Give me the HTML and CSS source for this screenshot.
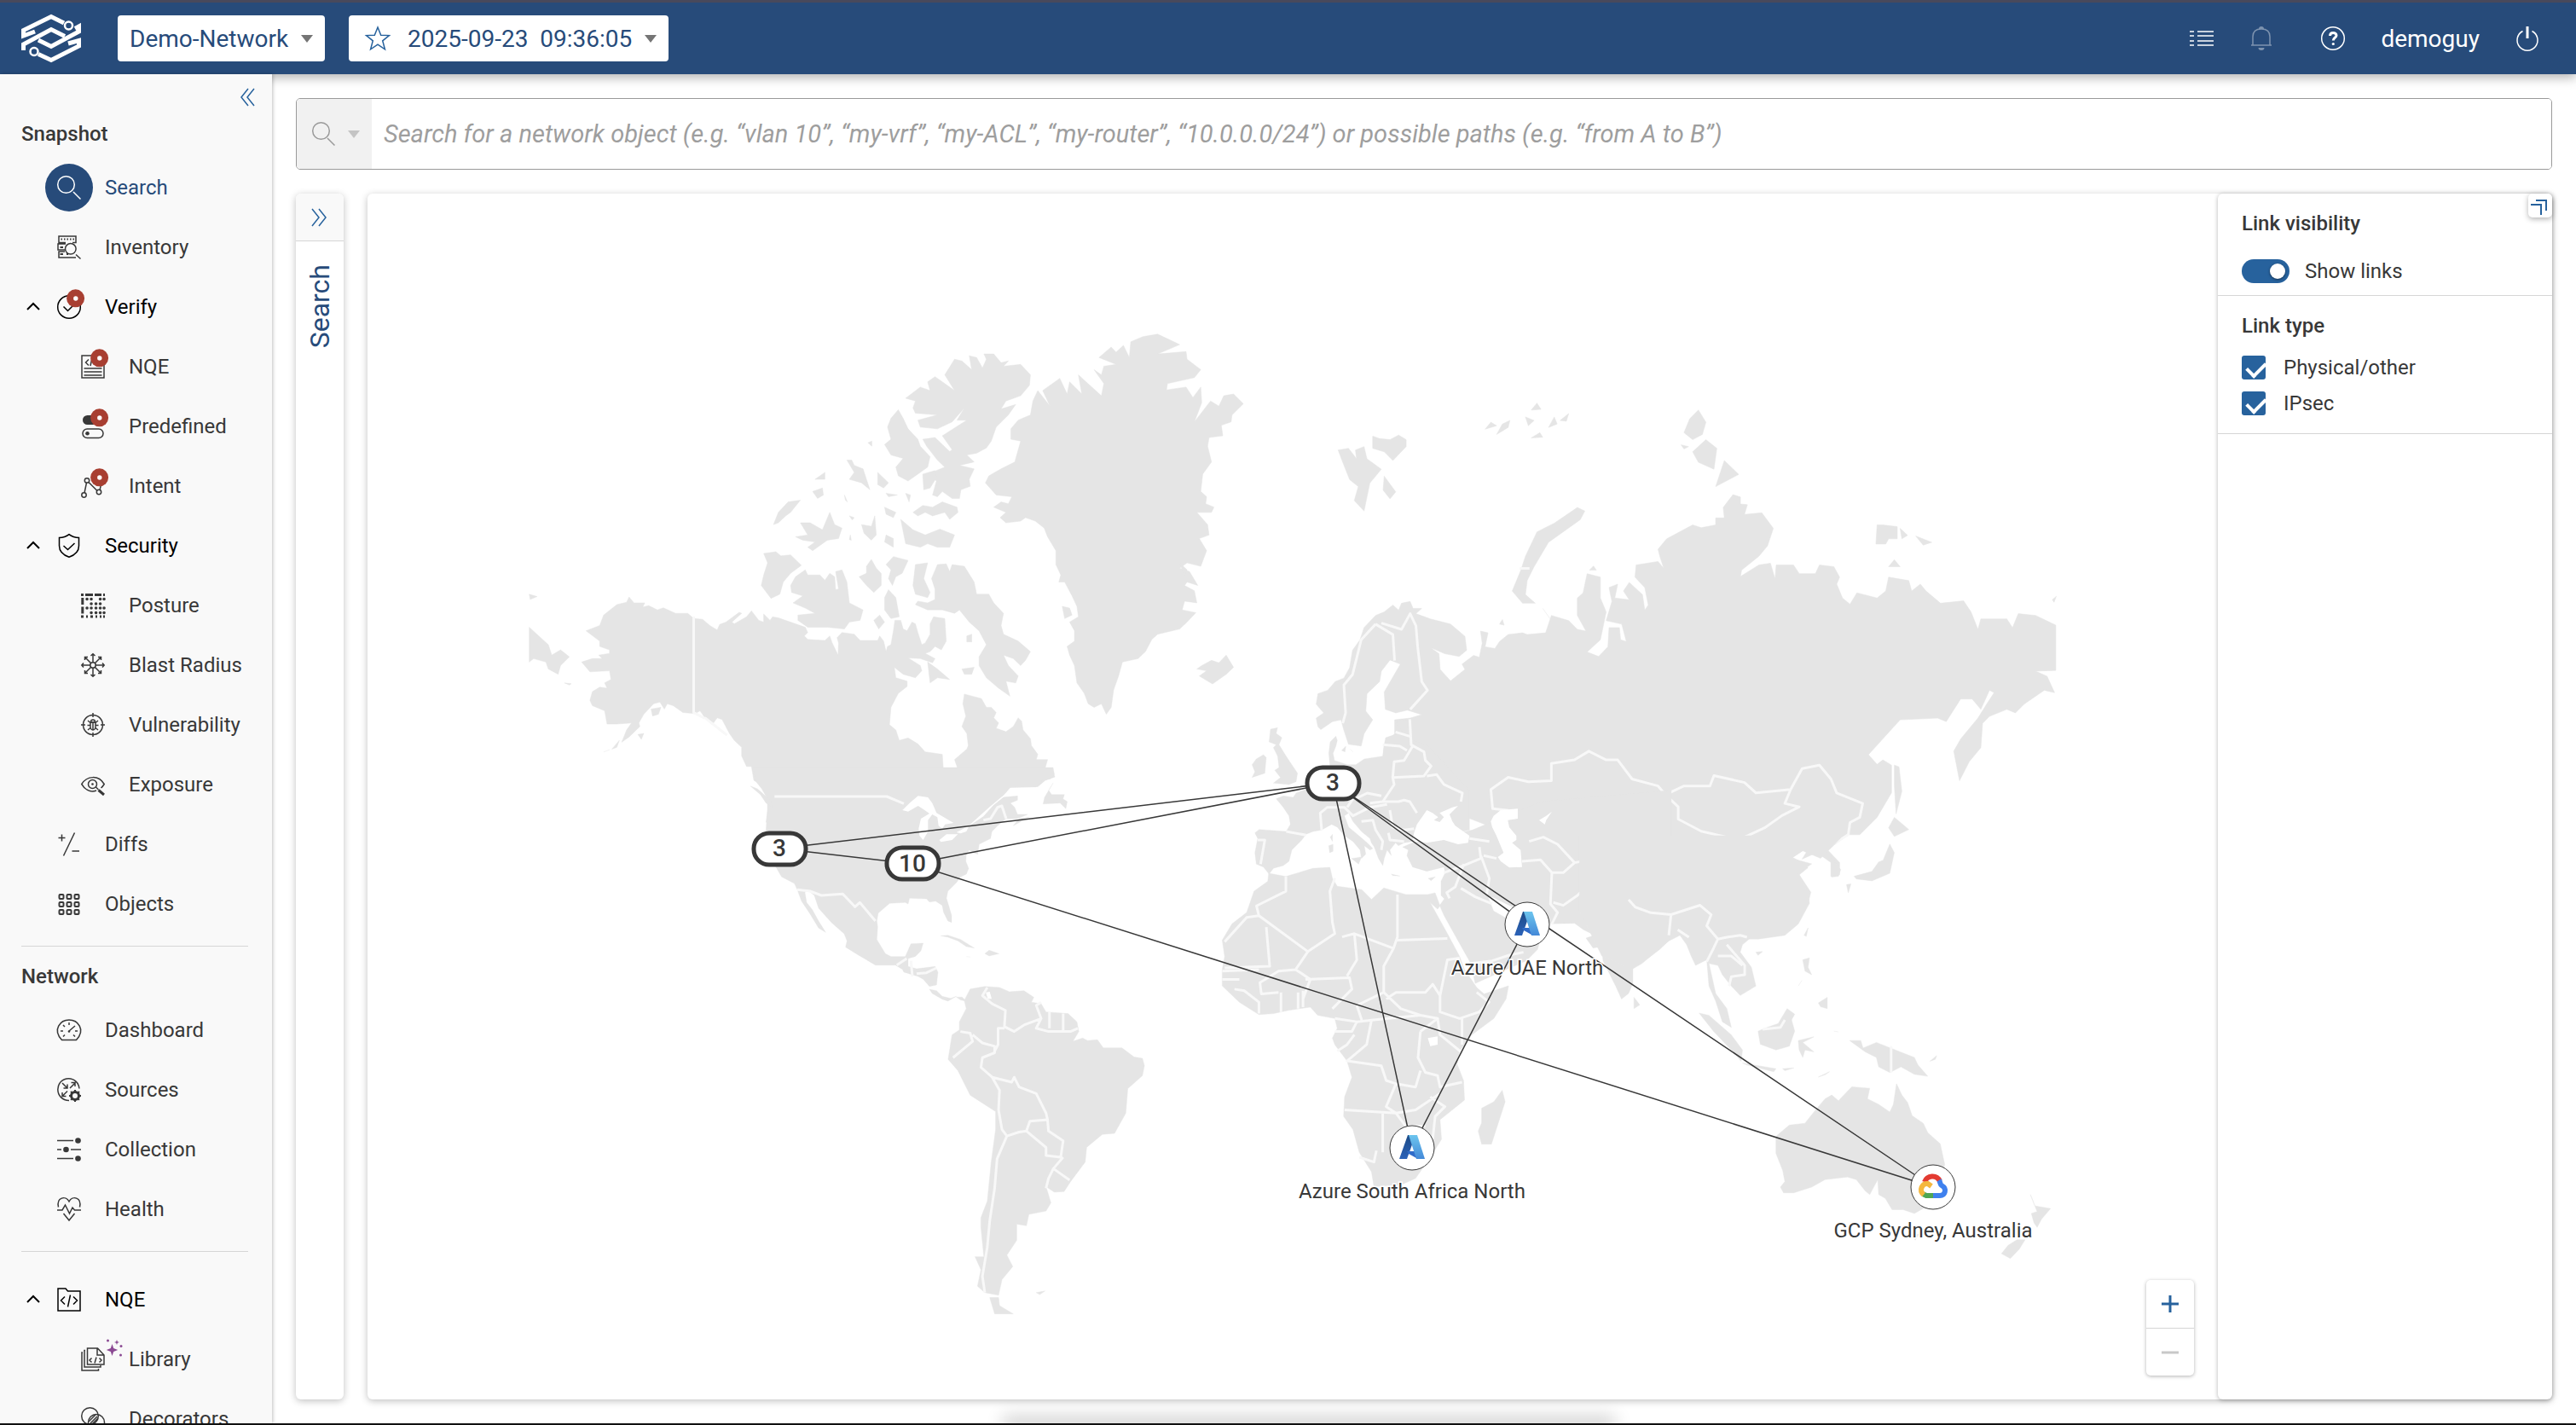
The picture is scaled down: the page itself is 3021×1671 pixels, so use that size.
FILE: index.html
```html
<!DOCTYPE html>
<html lang="en">

<head>
    <meta charset="UTF-8">
    <meta name="viewport" content="width=device-width, initial-scale=1.0">
    <title>Demo-Network - Search</title>
    <link rel="stylesheet" href="styles.css">
</head>

<body>

    <header class="topbar">
        <a class="logo" href="#" aria-label="Home">
            <svg width="70" height="58" viewBox="0 0 70 58" fill="none" stroke="#fff" stroke-width="5">
                <path d="M50 11L35 3.500L2.500 19.500V26L16 21" />
                <path d="M2.500 43V36L35 18.500L51 26.500" />
                <path d="M20 31L35 38.500L67.500 21V15L63 17.500" />
                <path d="M20 47.500L35 54.500L67.500 38V31.500L55 35" />
                <g fill="#274b7a" stroke-width="2.500">
                    <circle cx="55.500" cy="14" r="4.500" />
                    <circle cx="15" cy="44.500" r="4.500" />
                </g>
            </svg>
        </a>
        <div class="picker">
            <select aria-label="Network">
                <option>Demo-Network</option>
            </select>
            <span class="caret"></span>
        </div>
        <div class="picker picker-snapshot">
            <svg class="icon star" viewBox="0 0 28 28"><path d="M14 1l3.700 9.200 9.700.4-7.700 6.200 2.700 10-8.400-5.600-8.400 5.600 2.700-10L.6 10.600l9.700-.4z" /></svg>
            <select aria-label="Snapshot">
                <option>2025-09-23&nbsp; 09:36:05</option>
            </select>
            <span class="caret"></span>
        </div>

        <div class="topbar-actions">
            <button aria-label="Tasks">
                <svg class="icon" viewBox="0 0 28 28"><path d="M0 6h5M9 6h19M0 11h5M9 11h19M0 17h5M9 17h19M0 22h5M9 22h19" /></svg>
            </button>
            <button class="dimmed" aria-label="Notifications">
                <svg class="icon" viewBox="0 0 28 28"><path d="M2 22h24M4 22V12C4 6 8 3 14 3s10 3 10 9v10" /><path class="solid" d="M11 3a3 3 0 0 1 6 0zM10.500 25h7a3.500 3 0 0 1-7 0z" /></svg>
            </button>
            <button class="help" aria-label="Help">
                <svg class="icon" viewBox="0 0 28 28"><circle cx="14" cy="14" r="13.300" /><path class="bar" d="M10.500 11c0-5 7.500-4.500 7.500-.5 0 2.500-3.700 3-3.700 6" /><circle class="solid" cx="14.300" cy="20.500" r="1.600" /></svg>
            </button>
            <a class="user" href="#">demoguy</a>
            <button aria-label="Sign out">
                <svg class="icon" viewBox="0 0 28 28"><path d="M8.500 5.500a12 12 0 1 0 11 0" /><path class="bar" d="M14 0v14" /></svg>
            </button>
        </div>
    </header>

    <div class="layout">

        <nav class="sidebar">
            <div class="sidebar-collapse">
                <button aria-label="Collapse menu">
                    <svg class="icon" viewBox="0 0 28 28"><path d="M16 4L8 14l8 10M23 4l-8 10 8 10" /></svg>
                </button>
            </div>

            <section>
                <h2>Snapshot</h2>
                <a class="nav-item active" href="#">
                    <span class="chevron"></span>
                    <span class="nav-icon"><svg class="icon" viewBox="0 0 28 28"><circle cx="10.500" cy="10.500" r="9.800" /><path d="M19 19l8.500 8.500" /></svg></span>
                    Search
                </a>
                <a class="nav-item" href="#">
                    <span class="chevron"></span>
                    <span class="nav-icon"><svg class="icon" viewBox="0 0 28 28"><path d="M10 8.500H2V1h20v7.500h-4M9 17H1v-7h9M10 26H2v-7h7M10 26h12" /><path class="heavy" d="M4.500 4.500h1.500M8 4.500h1.500M11.500 4.500H13M15 4.500h1.500M18.500 4.500H20M3.500 14H7M3.500 22H7M11 22h2" /><circle cx="15.800" cy="15.800" r="6.300" /><path d="M22 22.500l5.500 5" /></svg></span>
                    Inventory
                </a>
                <a class="nav-item parent" href="#">
                    <span class="chevron"><svg class="icon" viewBox="0 0 28 28"><path class="heavy" d="M7 17l7-7 7 7" /></svg></span>
                    <span class="nav-icon"><svg class="icon" viewBox="0 0 28 28"><circle cx="14" cy="14" r="13.300" /><path d="M7.500 13.500l5 5 7-7" /><circle class="badge" cx="21.600" cy="3.800" r="10.500" /><circle class="badge-dot" cx="21.800" cy="4" r="2.700" /></svg></span>
                    Verify
                </a>
                <a class="nav-item child" href="#">
                    <span class="nav-icon"><svg class="icon" viewBox="0 0 28 28"><path d="M1 1h26v26H1zM3.500 16h21M3.500 20h21M3.500 24h21M9 5.500L5.500 9 9 12.500M13 4l-2 9" /><circle class="badge" cx="21.600" cy="3.800" r="10.500" /><circle class="badge-dot" cx="21.800" cy="4" r="2.700" /></svg></span>
                    NQE
                </a>
                <a class="nav-item child" href="#">
                    <span class="nav-icon"><svg class="icon" viewBox="0 0 28 28"><rect class="solid" x="2" y="1" width="24" height="11" rx="5.500" /><rect x="2" y="17" width="24" height="10.500" rx="5.200" /><circle class="solid" cx="7.500" cy="22.200" r="2.300" /><circle class="badge" cx="21.600" cy="3.800" r="10.500" /><circle class="badge-dot" cx="21.800" cy="4" r="2.700" /></svg></span>
                    Predefined
                </a>
                <a class="nav-item child" href="#">
                    <span class="nav-icon"><svg class="icon" viewBox="0 0 28 28"><path d="M4 22L6.500 10M9 9.500l10 10M22 19l3-14" /><circle cx="7" cy="7.400" r="2.700" /><circle cx="3.500" cy="24.500" r="2.700" /><circle cx="21" cy="21" r="2.700" /><circle class="badge" cx="21.600" cy="3.800" r="10.500" /><circle class="badge-dot" cx="21.800" cy="4" r="2.700" /></svg></span>
                    Intent
                </a>
                <a class="nav-item parent" href="#">
                    <span class="chevron"><svg class="icon" viewBox="0 0 28 28"><path class="heavy" d="M7 17l7-7 7 7" /></svg></span>
                    <span class="nav-icon"><svg class="icon" viewBox="0 0 28 28"><path d="M14 .7C10.500 3.500 6.500 4.500 2.500 4.500V14c0 7 5 11 11.500 13.300C20.500 25 25.500 21 25.500 14V4.500C21.500 4.500 17.500 3.500 14 .7zM7.500 14l5 4.500 8-7.500" /></svg></span>
                    Security
                </a>
                <a class="nav-item child" href="#">
                    <span class="nav-icon"><svg class="icon" viewBox="0 0 28 28"><path class="bar" d="M0 1.500h3M5 1.500h9M16 1.500h8M26 1.500h2M1.800 5v8M1.800 15.500v8M0 27h3M6 27h2M11 27h3M17 27h2M22 27h2M26 27h2" /><path class="dots" d="M7 6.500h.1M12 6.500h.1M22.500 6.500h.1M27 6.500h.1M12 12h.1M17.500 12h.1M22.500 12h.1M7 17h.1M12 17h.1M17.500 17h.1M22.500 17h.1M27 17h.1M12 22.500h.1M17.500 22.500h.1M22.500 22.500h.1M27 22.500h.1" /></svg></span>
                    Posture
                </a>
                <a class="nav-item child" href="#">
                    <span class="nav-icon"><svg class="icon" viewBox="0 0 28 28"><circle cx="14" cy="14" r="3.200" /><path d="M14 11V1M11.500 3L14 .8 16.500 3M14 17v10M11.500 25l2.500 2.200 2.500-2.200M11 14H1M3 11.500L.8 14 3 16.500M17 14h10M25 11.500l2.200 2.500-2.200 2.500M12 12L4.500 4.500M4.500 8V4.500H8M16 12l7.500-7.500M20 4.500h3.500V8M12 16l-7.500 7.500M4.500 20v3.500H8M16 16l7.500 7.500M20 23.500h3.500V20" /></svg></span>
                    Blast Radius
                </a>
                <a class="nav-item child" href="#">
                    <span class="nav-icon"><svg class="icon" viewBox="0 0 28 28"><circle cx="14" cy="14" r="11.500" /><path d="M14 0v5M14 23v5M0 14h5M23 14h5M14 12v8M11 11h6M7.500 14.500H11M17 14.500h3.500M8 9l3 2.500M20 9l-3 2.500M8 20l3-2.500M20 20l-3-2.500" /><path d="M11 11h6v5a3 4 0 0 1-6 0zM11.500 10.500a2.500 2.500 0 0 1 5 0" /></svg></span>
                    Vulnerability
                </a>
                <a class="nav-item child" href="#">
                    <span class="nav-icon"><svg class="icon" viewBox="0 0 28 28"><path d="M18 21C10 24 4 19 .8 13.500c6-10 20-11 26.400 0-1 1.700-2.200 3.200-3.700 4.500" /><circle cx="13.500" cy="13.500" r="5" /><circle class="solid" cx="13.500" cy="13.500" r="1.300" /><path d="M17.500 17l3 3" /><path class="bar" d="M20.500 20.500L27 26" /></svg></span>
                    Exposure
                </a>
                <a class="nav-item" href="#">
                    <span class="chevron"></span>
                    <span class="nav-icon"><svg class="icon" viewBox="0 0 28 28"><path d="M1.500 6.500h8M5.500 2.500v8M20.500.5L7.500 27.500M17.500 22h8.500" /></svg></span>
                    Diffs
                </a>
                <a class="nav-item" href="#">
                    <span class="chevron"></span>
                    <span class="nav-icon"><svg class="icon" viewBox="0 0 28 28"><g class="tiles"><rect x="2.500" y="3" width="5" height="5" rx="1" /><rect x="11.500" y="3" width="5" height="5" rx="1" /><rect x="20.500" y="3" width="5" height="5" rx="1" /><rect x="2.500" y="12" width="5" height="5" rx="1" /><rect x="11.500" y="12" width="5" height="5" rx="1" /><rect x="20.500" y="12" width="5" height="5" rx="1" /><rect x="2.500" y="21" width="5" height="5" rx="1" /><rect x="11.500" y="21" width="5" height="5" rx="1" /><rect x="20.500" y="21" width="5" height="5" rx="1" /></g></svg></span>
                    Objects
                </a>
            </section>

            <section>
                <h2>Network</h2>
                <a class="nav-item" href="#">
                    <span class="chevron"></span>
                    <span class="nav-icon"><svg class="icon" viewBox="0 0 28 28"><path d="M5.500 25.500C-6 13 4 2 14 2s20 11 8.500 23.500zM14 15l7-6M14 5v3M7 8l2 2M4 15h3M21 15h3M7 21.500l2-2M21 21.500l-2-2" /><circle class="solid" cx="14" cy="15.500" r="1.300" /></svg></span>
                    Dashboard
                </a>
                <a class="nav-item" href="#">
                    <span class="chevron"></span>
                    <span class="nav-icon"><svg class="icon" viewBox="0 0 28 28"><path d="M14 26.500C6 26.500.8 20.500.8 13.500S6 .8 13.500.8c6.500 0 12 5 12.500 11.700M6 6l6 6M12 7.500V12H7.500M15 12l6-6M16.500 5.500H21V10M12 15.500l-6 6M6 17v4.500h4.500" /><circle class="bar" cx="21" cy="21" r="4.500" /><path class="heavy" d="M21 14v14M14 21h14M16 16l10 10M26 16L16 26" stroke-dasharray="2.500 9 2.500" /></svg></span>
                    Sources
                </a>
                <a class="nav-item" href="#">
                    <span class="chevron"></span>
                    <span class="nav-icon"><svg class="icon" viewBox="0 0 28 28"><path d="M0 3.500h19M0 14h5M16 14h12M0 24.500h19" /><circle class="solid" cx="24.500" cy="3.500" r="3.300" /><circle class="solid" cx="10.500" cy="14" r="3.300" /><circle class="solid" cx="24.500" cy="24.500" r="3.300" /></svg></span>
                    Collection
                </a>
                <a class="nav-item" href="#">
                    <span class="chevron"></span>
                    <span class="nav-icon"><svg class="icon" viewBox="0 0 28 28"><path d="M1.500 11.500C-1 0 10-2.500 14 5c4-7.500 15-5 12.500 6.500M0 15h6l3.500-6 5 10 3.500-7 2.500 3H28M7.500 19l6.500 8 6.500-8" /></svg></span>
                    Health
                </a>
            </section>

            <section class="untitled">
                <a class="nav-item parent" href="#">
                    <span class="chevron"><svg class="icon" viewBox="0 0 28 28"><path class="heavy" d="M7 17l7-7 7 7" /></svg></span>
                    <span class="nav-icon"><svg class="icon" viewBox="0 0 28 28"><path d="M1 1h9l2.500 3H27v23H1zM9 10.500L4.500 15 9 19.500M19 10.500l4.500 4.500-4.500 4.500M15.500 8.500l-3 14" /></svg></span>
                    NQE
                </a>
                <a class="nav-item child" href="#">
                    <span class="nav-icon"><svg class="icon" viewBox="0 0 28 28"><path d="M7.500 1h12l7.500 8v11H7.500zM19 1v8h8M5 3.500H4V23h19v-2M2 6H1v21h19.500v-2M12.500 12.500L10 15l2.500 2.500M21.500 12.500L24 15l-2.500 2.500M18 11.500l-2 7" /><g class="sparkles"><path d="M36.500-4l1.700 5 5 2-5 2-1.700 5-1.700-5-5-2 5-2zM42-9l.8 2.200 2.200.8-2.200.8-.8 2.200-.8-2.200L39-6l2.200-.8z" /><circle cx="31.500" cy="-8" r="1.500" /><circle cx="47" cy="-1.500" r="1.500" /><circle cx="46.500" cy="9" r="1.500" /></g></svg></span>
                    Library
                </a>
                <a class="nav-item child" href="#">
                    <span class="nav-icon"><svg class="icon" viewBox="0 0 28 28"><circle cx="10.500" cy="10.500" r="9.800" /><circle cx="18" cy="18" r="9.500" /><path d="M9 17l8-8M11 19l8-8M13 20l7-7" /></svg></span>
                    Decorators
                </a>
            </section>
        </nav>

        <main class="content">
            <form class="search-bar">
                <button type="button" aria-label="Search type">
                    <svg class="icon" viewBox="0 0 28 28"><circle cx="10.500" cy="10.500" r="9.800" /><path d="M18 19l8.500 8.500" /></svg>
                    <span class="caret"></span>
                </button>
                <input type="text" aria-label="Search" placeholder="Search for a network object (e.g. “vlan 10”, “my-vrf”, “my-ACL”, “my-router”, “10.0.0.0/24”) or possible paths (e.g. “from A to B”)">
            </form>

            <div class="workspace">
                <aside class="card search-drawer">
                    <button aria-label="Expand search">
                        <svg class="icon" viewBox="0 0 28 28"><path d="M5 4l8 10-8 10M13 4l8 10-8 10" /></svg>
                    </button>
                    <h3>Search</h3>
                </aside>

                <div class="card map-card">
                    <div class="map">
                        <svg class="world" viewBox="431 227 2170 1414">
                            <!-- Greenland, Canada, Alaska -->
                            <g transform="translate(600 360) scale(.574 .4082)">
                                <path class="land" d="M240 833L250 850 272 850 268 862 280 858 298 870 310 864 335 880 360 880 372 895 390 897 405 915 420 928 425 912 438 905 465 877 470 880 450 905 455 910 480 890 490 873 505 900 515 905 515 882 528 900 533 890 545 893 600 920 605 935 598 945 605 955 640 958 650 945 655 965 667 1000 668 965 665 950 675 935 700 940 712 958 748 958 752 945 760 960 765 990 768 975 775 970 780 930 783 900 795 900 800 925 808 930 818 905 825 910 830 935 838 970 845 965 855 940 855 910 862 890 885 895 888 960 878 985 865 975 855 990 845 995 865 1010 860 1022 835 1010 810 1008 835 1030 838 1045 825 1065 800 1055 782 1035 785 1065 808 1075 808 1090 790 1110 775 1150 772 1200 785 1215 792 1245 810 1238 830 1255 845 1278 880 1285 882 1330 895 1345 907 1370 915 1340 905 1300 930 1270 933 1260 930 1225 920 1205 928 1175 922 1140 925 1112 960 1125 970 1150 980 1150 990 1165 985 1180 995 1195 990 1210 1010 1220 1025 1205 1035 1180 1042 1190 1045 1215 1060 1240 1062 1260 1075 1285 1072 1300 1095 1300 1090 1325 1105 1335 1110 1350 1090 1360 1075 1378 1018 1380 985 1415 940 1480 520 1480 525 1430 533 1410 515 1375 495 1360 490 1320 480 1320 470 1290 470 1265 455 1245 445 1225 430 1185 420 1180 410 1200 395 1180 385 1160 375 1168 350 1165 330 1145 318 1140 312 1155 303 1135 290 1140 270 1170 260 1195 262 1205 240 1235 225 1250 235 1215 245 1195 215 1198 195 1198 190 1160 165 1145 160 1130 165 1105 180 1092 195 1095 190 1080 203 1070 200 1045 160 1048 143 1020 165 1010 185 1010 178 1000 200 995 200 985 180 975 180 960 152 930 180 915 188 885 215 855 235 848z" />
                                <path class="land" d="M1320 78L1365 108 1320 135 1378 128 1380 150 1408 180 1395 203 1340 220 1338 238 1378 230 1392 260 1408 230 1410 275 1395 330 1428 270 1445 285 1455 255 1475 250 1495 278 1472 310 1470 330 1450 340 1453 370 1425 375 1422 400 1430 445 1412 480 1408 530 1420 545 1418 565 1435 575 1430 590 1400 590 1422 625 1425 655 1405 665 1420 700 1408 745 1380 735 1365 750 1385 760 1402 800 1380 790 1375 800 1395 815 1400 850 1375 845 1370 870 1398 878 1380 905 1365 925 1320 940 1308 955 1295 990 1280 1010 1248 1020 1240 1060 1230 1100 1225 1150 1215 1170 1205 1140 1190 1150 1178 1140 1170 1110 1155 1080 1150 1030 1140 1000 1135 975 1150 960 1150 930 1140 905 1158 890 1155 860 1145 830 1130 790 1118 790 1122 770 1112 740 1112 700 1095 660 1088 635 1070 615 1050 605 1040 615 1010 620 998 605 1010 590 985 575 1000 560 1015 565 1022 545 990 540 968 505 975 485 1000 465 1028 445 1040 385 1020 380 1020 350 1035 325 1060 310 1065 270 1075 240 1100 285 1085 240 1120 205 1135 250 1140 215 1165 250 1158 195 1205 255 1210 220 1190 180 1205 195 1210 170 1235 165 1200 145 1225 115 1235 130 1250 110 1262 145 1265 100 1290 85z" />
                                <path class="land" d="M905 150L920 155 940 180 935 140 950 145 962 175 970 150 965 135 985 135 1000 160 1015 155 1005 170 1040 165 1060 195 1058 225 1040 255 1010 270 1000 293 1030 280 1015 310 990 345 980 385 970 405 950 420 930 425 945 445 915 455 945 465 935 495 937 515 918 525 915 550 900 550 880 530 870 545 860 540 868 500 850 480 885 460 870 440 848 400 840 380 865 375 895 415 900 410 880 370 930 325 910 325 925 290 900 330 870 350 835 345 830 325 870 310 825 305 820 290 825 270 805 262 835 230 855 240 850 215 865 200 880 215 905 240 885 195z" />
                                <path class="land" d="M790 295L800 320 810 350 830 380 835 400 855 430 850 460 830 480 810 500 790 485 785 460 800 435 775 425 762 395 775 380 768 345 775 320zM515 708L540 703 550 715 570 712 592 742 570 765 555 790 548 825 530 837 510 800 515 770 523 735zM600 755L605 770 630 770 640 785 650 765 660 775 662 812 668 810 662 760 675 755 685 790 690 850 718 870 712 900 690 905 680 925 645 920 605 920 585 900 585 885 620 880 600 865 575 850 595 830 572 820 570 800 580 775zM735 725L745 750 755 765 755 800 740 820 725 800 710 775 725 765 725 745zM780 717L810 728 798 765 785 775 778 800 770 780 775 755 765 740zM770 812L785 835 792 890 775 895 762 870 762 835zM825 740L850 735 842 780 855 820 850 835 825 825 820 800z" />
                                <path class="land" d="M870 740L888 738 895 760 900 740 925 745 945 790 950 825 975 825 985 850 1005 880 1000 915 1005 940 1035 960 1060 990 1050 1015 1040 1030 1025 1010 1005 1000 1015 1030 1035 1060 1030 1080 1010 1075 1018 1118 995 1095 970 1065 955 1030 955 1005 970 970 955 930 935 905 915 870 905 880 880 870 850 870 825 855 830 845 850 850 865 840 865 810 858 780zM850 1020L870 1040 895 1070 870 1065 855 1080zM795 610L820 640 845 655 875 638 905 655 895 690 870 690 850 680 835 690 805 680zM715 625L735 630 742 600 745 655 735 670 720 650zM580 660L605 655 590 620 610 620 635 640 650 590 660 625 675 635 668 665 645 670 615 700 605 690 620 675 595 670zM535 625L545 590 565 560 590 555 570 590 560 600 545 620zM685 440L695 440 700 455 718 465 732 525 715 505 690 495 700 475zM620 495L640 475 640 495zM615 530L635 520 637 540 625 550zM748 475L770 505 760 520 748 510zM820 590L840 570 860 575 880 560 910 575 912 590 895 610 885 590 860 600 845 590 830 600zM762 575L785 590 780 605 765 595zM765 655L780 665 780 690 762 675zM920 1040L945 1035 940 1055 925 1055zM930 945L940 940 940 962 930 962zM728 390L736 385 736 400zM765 535L788 540 770 545zM740 900L752 885 762 905 750 925zM840 480L865 470 868 490 855 520 842 525zM690 600L700 605 696 612zM692 655L694 670 690 668zM805 535L815 540 812 560zM680 540L686 560 682 555z" />
                                <path class="land" d="M36 920L75 970 82 1000 100 985 118 1005 100 1030 95 1055 75 1040 70 1020 45 1010 36 1020zM36 825L52 832 38 840zM285 1155L305 1150 300 1170 288 1175zM205 1270L220 1245 215 1265zM258 1228L270 1225 265 1242zM188 1278L200 1272M1410 1030L1430 1015 1445 1022 1460 1000 1475 1035 1460 1055 1432 1083 1405 1060 1420 1045 1400 1040zM1125 860L1140 865 1145 885 1130 895zM1365 735L1380 755 1375 775zM108 1080L122 1082 118 1086z" />
                                <path class="border" d="M372 890V1165L395 1182M395 1180L440 1230" />
                            </g>

                            <!-- United States, Mexico, Caribbean -->
                            <g transform="translate(860 900) scale(.3333)">
                                <path class="land" d="M70 0L1125 0 1130 25 1115 40 1090 42 1065 68 975 70 945 105 1000 100 1000 115 975 125 990 140 1000 165 1035 165 1000 180 960 180 930 205 910 225 905 250 865 270 860 305 845 300 830 290 820 305 818 330 828 355 820 375 800 385 785 405 755 435 750 460 768 520 768 545 755 540 740 510 735 485 712 470 690 473 680 462 620 460 615 480 605 475 550 478 510 512 505 540 508 560 505 605 535 655 555 665 605 665 625 620 668 618 660 645 640 665 615 672 615 700 645 708 710 700 720 720 715 765 690 770 668 745 650 735 600 720 595 710 570 695 500 695 440 660 395 632 400 610 390 585 345 545 300 495 285 450 260 430 252 440 258 475 278 500 300 540 325 580 300 565 270 515 240 470 225 430 215 408 170 385 150 350 115 300 115 220 120 150 120 110 100 75 80 50z" />
                                <path class="land" d="M690 780L715 785 735 805 765 812 785 805 755 822 735 815 700 795zM785 808L805 808 820 822 800 818zM730 592L755 590 800 605 848 635 820 630 790 610 755 597zM885 655L900 643 935 655 900 663zM820 665L835 667M1125 55L1110 80 1120 95 1165 95 1160 110 1175 120 1170 145 1150 125 1090 128 1095 105zM985 205L1005 180 1040 175zM60 65L85 75 130 115 140 140 115 125 95 95z" />
                                <path class="water" d="M595 150L620 125 650 100 685 105 700 125 715 160 775 195 745 200 735 215 722 205 718 175 700 165 685 185 685 225 668 255 655 240 652 215 660 180 690 162 670 148 650 135 615 155zM725 255L750 235 790 235 770 255 730 262zM785 228L830 205 820 225 800 232z" />
                                <path class="water" d="M600 130L620 122M820 212L880 172 915 133 975 85 960 90 900 140 850 185z" />
                                <path class="border" d="M145 102H540L600 127M880 185L905 180 930 140 945 135 960 180M225 430L270 435 310 450 385 445 428 490 445 475 500 540M575 695L610 672M645 725L680 722 715 705M625 680L630 735" />
                            </g>

                            <!-- South America and Africa -->
                            <g transform="translate(1000 980) scale(.574 .3827)">
                                <path class="land" d="M270 462L300 465 320 478 350 475 370 495 365 510 385 515 395 540 440 545 458 570 462 600 450 630 470 620 480 628 500 625 512 650 550 650 575 678 592 682 596 705 592 735 562 775 558 850 535 912 510 915 478 955 475 1000 445 1060 432 1090 412 1092 395 1075 405 1125 395 1150 360 1160 355 1195 335 1190 335 1240 315 1285 327 1320 305 1360 298 1408 270 1400 255 1380 262 1330 250 1290 268 1290 262 1200 262 1170 275 1120 283 1000 292 900 292 845 240 795 215 720 195 685 203 610 218 595 218 570 232 530 228 505 240 470zM280 1415L298 1415 300 1440 328 1465 290 1465zM375 1400L393 1395 382 1406z" />
                                <path class="water" d="M272 480L280 478 284 500 276 500z" />
                                <path class="border" d="M275 465L265 490 285 515 312 535 310 585 330 600 350 580 385 560 375 520 385 510M385 560L375 590 400 600 445 600 460 590M402 540V590M430 545V600M310 590H297V640L290 660M205 680L245 630 240 605 220 600M245 610L265 635 290 645 290 665 265 680 262 710 285 740 325 755 330 740 340 770 375 790 395 850 398 870 362 875 355 905 340 908 315 920 305 900 298 840 300 780 285 740M398 870L400 905 430 935 425 985 395 980 395 955 355 905M430 985L410 1020 443 1055M410 1020L400 1050 395 1080M315 920L295 990 290 1080 280 1180 275 1260 265 1350 270 1400" />
                                <path class="land" d="M850 115L885 125 940 100 975 97 980 130 990 155 1040 165 1060 195 1085 160 1130 180 1175 180 1190 175 1200 215 1195 225 1180 205 1215 300 1240 370 1250 410 1275 465 1290 485 1340 460 1335 500 1310 560 1265 610 1240 660 1235 700 1248 750 1250 810 1200 870 1203 930 1180 985 1150 1050 1120 1070 1065 1075 1060 1030 1035 970 1022 900 1003 860 1005 800 1020 740 1010 690 985 640 980 620 990 590 985 560 950 550 935 525 890 535 860 545 830 548 790 510 755 460 755 410 760 370 755 320 775 270 805 235 820 170 848 140zM1327 780L1333 815 1305 945 1285 945 1278 905 1285 880 1285 835 1310 815z" />
                                <path class="water" d="M1175 620L1195 615 1195 640 1180 645z" />
                                <path class="border" d="M885 125V170L825 215 830 245 805 250 760 325M830 245L930 355 985 300 980 265 975 170 985 130M845 280L852 400 760 405M930 355L905 410 870 415 832 450 835 485 870 480M1000 310L1025 300 1105 345V345L1113 310V180M1113 320L1215 315M1025 300L1030 380 1010 430M925 440L1015 435 1020 470 980 530M1105 345L1085 400 1085 480 1030 520M905 410L935 440 920 500M875 480V540M910 480V530M920 475V525M755 415L830 410M755 440H790M780 470L800 475 830 510V545M1085 480L1120 530 1160 550 1060 565 1030 570 985 560M1090 500L1110 480 1170 480 1185 455 1200 490V540L1240 560 1280 540 1300 510 1275 480M1200 490L1215 380 1240 375M1195 560L1200 610 1245 665M1245 560V640M1160 550L1195 560 1160 600M1060 565L1050 640 1010 690 1080 705 1090 750 1110 760 1150 770 1160 720M1160 600L1155 680 1170 725 1195 735 1200 770 1245 755M1110 760L1090 830 1110 850 1150 840 1200 790M1005 840L1110 850M1083 850V970M1035 985L1065 1000 1070 965M1110 850L1130 890 1170 890M1180 800L1210 830 1190 860 1185 930M1030 570L1020 600H985M1030 520L1040 565M990 660L1010 640 1025 610" />
                            </g>

                            <!-- Scandinavia, Russia, northern Asia -->
                            <g transform="translate(1380 440) scale(.676 .4082)">
                                <path class="land" d="M245 1010L242 985 255 970 242 945 245 915 262 905 275 880 290 870 300 840 305 790 318 760 325 725 345 690 360 680 375 660 385 675 390 655 405 650 410 670 425 670 415 685 440 700 475 715 500 750 503 790 490 808 465 800 440 782 455 800 457 845 475 878 500 845 495 830 515 805 525 810 530 770 527 735 540 740 535 780 552 785 560 765 575 745 600 740 608 745 640 740 650 690 680 705 695 730 710 735 695 690 695 640 705 625 712 570 735 580 735 640 745 680 735 760 712 795 732 808 748 780 750 725 768 725 770 760 780 765 772 715 745 705 755 650 750 610 765 600 760 640 785 645 775 620 785 595 808 630 812 675 818 660 812 610 795 580 797 545 835 535 845 555 838 520 835 500 850 470 895 430 910 438 935 430 935 410 950 410 948 380 965 343 978 350 978 370 990 372 985 400 1015 395 1035 440 1025 490 1010 520 980 560 978 578 1010 545 1030 540 1038 585 1040 545 1070 545 1080 570 1108 570 1115 545 1140 550 1150 580 1145 600 1155 640 1168 658 1180 625 1215 640 1230 620 1235 580 1270 590 1275 620 1290 600 1300 620 1325 655 1365 648 1378 680 1390 730 1395 700 1440 700 1450 725 1460 685 1490 690 1525 718 1525 848 1490 850 1510 865 1523 912 1505 905 1470 945 1455 970 1440 960 1410 980 1398 1000 1395 1070 1375 1110 1358 1165 1348 1080 1360 1045 1390 985 1405 945 1418 912 1410 905 1395 960 1380 930 1360 930 1335 995 1320 985 1255 990 1200 1090 1215 1118 1225 1105 1240 1120 1240 1200 1215 1270 1185 1320 1165 1320 1140 1350 1130 1365 1150 1400 1150 1435 1135 1440 1135 1400 1118 1380 1125 1360 1085 1390 1100 1350 1068 1385 1085 1400 1095 1415 1080 1435 1100 1485 1095 1520 1080 1568 640 1568 600 1420 550 1300 440 1230 350 1150 358 1095 360 1060 378 1030 378 990 405 985 425 975 400 962 380 970 362 960 360 910 388 830 370 818 355 850 352 880 330 915 328 965 340 990 325 1030 320 1065 298 1060 290 1020 285 990 270 995 250 1018z" />
                                <path class="land" d="M695 380L708 390 700 415 645 480 620 550 608 590 605 630 622 655 600 655 582 620 597 560 605 520 625 450 655 425zM280 215L298 210 312 240 310 215 325 205 330 240 355 270 335 310 325 390 308 360 315 320 300 300 288 250zM340 175L352 182 370 185 385 172 398 185 398 205 375 245 360 220 340 210zM360 290L380 335 370 355 358 330zM535 155L545 135 555 145zM555 170L565 140 578 130 575 150zM605 120L620 130 610 145zM615 100L625 80 632 98zM645 150L655 120 660 140zM665 130L680 110 676 132zM615 180L630 165 635 178zM880 165L890 125 905 100 918 135 912 170 895 185zM895 220L918 185 937 210 932 270 905 250zM875 200L888 205 880 212zM950 245L975 285 935 320zM1213 485L1215 430 1225 430 1250 435 1250 470 1235 470 1230 485zM1255 440L1268 460 1258 470zM1282 462L1310 480 1295 488zM1235 550L1245 530 1255 550zM1245 1120L1253 1125 1258 1195 1248 1260 1245 1180zM1245 1270L1270 1305 1245 1325 1235 1300zM716 560L723 548 728 560zM560 715L565 702 568 718zM635 670L648 700M1519 645L1526 635 1522 652z" />
                                <path class="border" d="M595 555H612M575 1250L548 1245 545 1190 575 1155 610 1168 650 1165 650 1115 690 1105 715 1080 745 1105 765 1105 790 1160 835 1180 848 1205 810 1260 795 1310 785 1325 720 1330 685 1320 655 1310 640 1275 612 1280V1340M848 1205L880 1180 925 1180 932 1150 985 1170 1005 1200 1065 1190 1055 1230 1080 1240 1050 1265 1020 1300 975 1335 910 1310 870 1275 870 1240 848 1205M1065 1190L1085 1130 1115 1120 1135 1160 1145 1200 1190 1230 1185 1270 1168 1285 1165 1320 1125 1360M612 1340L635 1325 690 1400 715 1400M720 1330L700 1380 740 1400 730 1350 770 1350 795 1315M345 715L320 760 305 860 290 890 293 970 288 1000M345 715L375 745 378 820M355 712L390 730 405 685 415 720 418 780 425 880 435 905 405 960" />
                            </g>

                            <!-- Europe, Middle East -->
                            <g transform="translate(1440 740) scale(.3333)">
                                <path class="land" d="M380 370L385 385 380 405 370 430 375 455 420 470 450 470 480 450 545 440 550 400 555 375 570 370 600 360 640 380 700 400 850 560 850 700 650 740 620 745 600 755 590 745 570 770 575 790 560 770 550 800 545 825 530 800 515 760 505 745 500 730 470 705 440 670 425 640 410 650 425 690 455 715 490 745 510 765 500 770 480 755 485 785 470 800 465 770 440 740 410 720 385 690 365 680 330 700 300 705 275 715 260 735 225 770 215 810 195 825 160 835 145 855 125 830 100 820 95 780 105 730 95 710 110 698 205 705 220 680 215 650 195 620 170 590 195 580 230 585 240 570 280 555 320 520 360 480 355 430 360 390zM590 325L610 310 645 315 645 355 615 355z" />
                                <path class="land" d="M150 345L175 340 170 360 190 375 180 400 205 440 225 470 245 500 240 530 215 540 160 535 185 515 165 490 180 480 175 440 160 410 170 400 145 390zM85 470L100 450 125 435 135 445 130 500 85 515 95 495zM435 800L470 795 460 820zM355 755L370 750 370 775 358 780zM360 725L368 715 368 740zM575 855L605 862 580 860zM705 870L730 865 715 878zM400 420L415 405 412 425zM430 415L440 425" />
                                <path class="land" d="M615 760L650 745 860 700 1100 600 1560 560 1560 1080 1520 1120 1480 1150 1425 1185 1425 1240 1410 1275 1385 1295 1365 1250 1320 1160 1315 1110 1285 1115 1260 1080 1290 1070 1250 1050 1220 1028 1140 1030 1090 1010 1060 970 1010 975 960 950 930 935 900 935 830 930 770 950 750 930 750 880 765 850 760 830 700 845 650 830 630 790 635 770z" />
                                <path class="land" d="M770 930L830 890 915 935 935 985 980 1010 1050 1030 1100 1080 1090 1120 1050 1160 980 1190 870 1240 855 1170 810 1090 760 1000 745 965z" />
                                <path class="water" d="M665 680L700 630 720 640 740 655 725 665 745 672 760 655 745 640 790 620 810 615 780 645 790 670 800 685 850 720 845 745 810 750 760 735 700 745 650 735 655 710z" />
                                <path class="water" d="M935 650L960 630 1020 625 1020 660 985 665 990 690 1015 720 1015 735 1000 745 1030 770 1035 830 990 832 960 810 950 795 970 780 945 720 930 690 925 670zM1095 665L1120 650 1140 635 1120 665 1115 680z" />
                                <path class="border" d="M640 310L645 400 690 425 695 455 715 475 690 510 580 515 585 460 620 455 650 405M545 400L605 405 630 420M590 355L640 370M580 515L585 540 545 600M700 510L735 505 760 540 825 570 820 600M500 605L545 600 600 600 620 595 640 600 665 640M450 590L490 570 540 580M570 630L580 690 620 700 655 695M565 710L570 735 620 740M330 700L325 640 350 620 410 620 440 650 500 620 560 610M205 705L275 718M105 735H130L115 820M470 670L510 665 520 700 545 740 540 770M420 620L440 590" />
                                <path class="border" d="M885 760L890 800 830 825 760 850M890 790L920 870 910 930M900 790L945 800M850 730L920 740M830 820L800 900 770 920 780 940M1035 810L1100 805 1140 850 1135 960 1160 990 1140 1030M1140 850L1180 850 1220 815 1300 800 1290 870 1230 930 1180 965 1145 955M1300 830L1350 870 1340 920 1310 980 1275 1000 1280 1050M1350 830L1400 870 1410 920 1560 990M1430 950L1440 980 1540 1015M1060 740L1110 725 1160 750 1220 815M820 905L870 935 930 960M850 1170L930 1160 990 1140 1040 1130M1300 800L1350 830" />
                            </g>

                            <!-- South-east Asia and Australia -->
                            <g transform="translate(1800 980) scale(.5236 .4407)">
                                <path class="land" d="M100 0L690 0 640 60 600 40 575 60 620 75 590 100 612 150 615 180 590 235 560 265 500 275 480 275 465 290 460 310 485 350 495 400 460 425 440 400 420 370 410 345 390 340 405 420 430 460 440 510 420 495 405 440 390 400 385 330 360 345 350 320 340 290 325 265 300 280 280 300 240 340 218 355 150 320 100 200z" />
                                <path class="land" d="M222 430L235 450 222 460zM495 310L510 308 500 318zM603 265L612 245 608 268zM368 472L390 478 440 530 465 570 462 600 440 570 400 520zM465 605L540 620 535 628 475 610zM500 520L520 510 545 500 565 460 582 475 575 490 582 520 570 560 540 570 505 555zM590 545L625 535 600 550 625 575 605 570 600 590 592 570zM600 330L615 325 612 350 620 370 605 360zM635 445L655 430 655 460 640 455zM705 545L730 545 735 565 765 550 850 590 858 610 880 640 850 635 820 615 795 630 770 615 765 590 740 575zM885 600L900 585 897 595zM635 642L660 628 650 636zM555 620L580 618 560 625zM795 22L805 45 795 100 755 120 720 115 715 108 755 95 770 70 780 65zM698 130L708 128 702 152zM670 520L680 522M590 400L598 385M665 60L685 90 680 108 665 110z" />
                                <path class="land" d="M810 660L822 690 835 710 845 745 870 765 880 790 908 820 918 875 905 940 880 985 850 1005 825 995 800 995 785 965 770 955 768 915 750 955 740 945 720 915 700 908 650 915 620 935 580 950 557 950 550 935 560 920 555 890 540 845 540 800 570 770 605 765 625 735 650 700 665 690 680 705 700 680 710 668 750 672 745 700 770 715 795 735 803 715zM845 1062L860 1060 852 1076zM1110 955L1120 985 1155 992 1135 1020 1125 1042 1118 1030 1112 1005 1125 1000zM1098 1075L1085 1100 1065 1125 1045 1112 1060 1090 1080 1075z" />
                                <path class="border" d="M210 170L225 190 260 205 305 210 300 265M320 250L345 270M305 210L370 185 395 210 385 240 410 275 400 300 385 335M410 275L430 270 460 265 475 270M430 290L470 345 470 370 440 375 435 400M410 320L440 320 465 345M798 560V630M510 515L550 510 560 490" />
                            </g>

                            <!-- Links -->
                            <g class="links">
                                <path d="M914 995L1563 918M914 995L1070 1013M1070 1013L1563 918M1070 1013L2267 1392M1563 918L1791 1084M1563 918L2267 1392M1563 918L1656 1346M1791 1084L1656 1346" />
                            </g>

                            <!-- Clusters -->
                            <g class="cluster">
                                <rect x="884" y="977" width="61" height="37" rx="18" />
                                <text x="914" y="1004">3</text>
                                <rect x="1040" y="994" width="61" height="37" rx="18" />
                                <text x="1070" y="1022">10</text>
                                <rect x="1533" y="900" width="61" height="37" rx="18" />
                                <text x="1563" y="927">3</text>
                            </g>

                            <!-- Cloud sites -->
                            <defs>
                                <linearGradient id="azure-dark" x1="0" y1="0" x2="0" y2="1">
                                    <stop offset="0" stop-color="#1c4a86" />
                                    <stop offset="1" stop-color="#2b62b8" />
                                </linearGradient>
                                <linearGradient id="azure-light" x1="0" y1="0" x2="0" y2="1">
                                    <stop offset="0" stop-color="#6cc5ee" />
                                    <stop offset="1" stop-color="#4489d8" />
                                </linearGradient>
                                <g id="azure">
                                    <circle class="site-disc" r="26" />
                                    <path fill="url(#azure-dark)" d="M-5-15H4L-6 13H-15z" />
                                    <path fill="#2f6bc9" d="M-6 4H4L7 13-4 7z" />
                                    <path fill="url(#azure-light)" d="M-4-15H6L15 13H5z" />
                                </g>
                            </defs>
                            <g class="site">
                                <use href="#azure" x="1791" y="1084" />
                                <text x="1791" y="1143">Azure UAE North</text>
                                <use href="#azure" x="1656" y="1346" />
                                <text x="1656" y="1405">Azure South Africa North</text>
                                <g transform="translate(2267 1392)" fill="none" stroke-width="6">
                                    <circle class="site-disc" r="26" />
                                    <path stroke="#e33b32" d="M-10-6C-7-14 4-15 8-7" />
                                    <path stroke="#3f81ee" d="M7-8C9-5 8-3 10-2 17 2 14 10 8 10H0" />
                                    <path stroke="#4fa653" d="M0 10H-8L-12 8" />
                                    <path stroke="#f4b73e" d="M-11 9C-17 4-13-5-6-4L-2-1" />
                                </g>
                                <text x="2267" y="1451">GCP Sydney, Australia</text>
                            </g>
                        </svg>

                        <div class="zoom">
                            <button aria-label="Zoom in"><svg class="icon" viewBox="0 0 28 28"><path d="M14 4v20M4 14h20" /></svg></button>
                            <button aria-label="Zoom out" disabled><svg class="icon" viewBox="0 0 28 28"><path d="M4 14h20" /></svg></button>
                        </div>
                    </div>

                    <aside class="options">
                        <button class="collapse" aria-label="Collapse options">
                            <svg class="icon" viewBox="0 0 28 28"><path d="M9 8h12v12M3 13h12v12" /></svg>
                        </button>
                        <section>
                            <h3>Link visibility</h3>
                            <label class="toggle"><input type="checkbox" checked> Show links</label>
                        </section>
                        <section>
                            <h3>Link type</h3>
                            <div class="checks">
                                <label class="check"><input type="checkbox" checked> Physical/other</label>
                                <label class="check"><input type="checkbox" checked> IPsec</label>
                            </div>
                        </section>
                    </aside>
                </div>
            </div>
        </main>
    </div>

</body>

</html>
```

FILE: styles.css
```css
* {
    box-sizing: border-box;
}

body {
    font-family: Roboto, "Liberation Sans", sans-serif;
    font-size: 24px;
    color: #383838;
    background-color: #fff;
    margin: 0;
    height: 100vh;
    display: flex;
    flex-direction: column;
    overflow: hidden;
    border-bottom: 2px solid #111;
}

h2,
h3 {
    font-size: 24px;
    font-weight: 500;
    margin: 0;
}

a {
    color: inherit;
    text-decoration: none;
}

button {
    display: flex;
    align-items: center;
    justify-content: center;
    border: none;
    background: none;
    padding: 0;
    color: #27629d;
    cursor: pointer;
}

.icon {
    width: 28px;
    height: 28px;
    flex: none;
    overflow: visible;
    fill: none;
    stroke: currentColor;
    stroke-width: 1.5;
}

.icon .heavy {
    stroke-width: 2;
}

.icon .bar {
    stroke-width: 3;
}

.icon .dots {
    stroke-width: 3.5;
    stroke-linecap: round;
}

.icon .tiles {
    stroke-width: 2;
}

.icon .solid {
    fill: currentColor;
    stroke: none;
}

.icon .badge {
    fill: #a83f32;
    stroke: none;
}

.icon .badge-dot {
    fill: #fff;
    stroke: none;
}

.icon .sparkles {
    fill: #8b4a93;
    stroke: none;
}

.caret {
    border: 7px solid transparent;
    border-top: 9px solid #757575;
    border-bottom: none;
}

/* Top bar */
.topbar {
    display: flex;
    align-items: center;
    height: 87px;
    flex: none;
    padding: 0 43px 0 25px;
    border-top: 3px solid #48495c;
    background-color: #274b7a;
    color: #fff;
    box-shadow: 0 4px 12px rgba(0, 0, 0, 0.3);
}

.logo {
    display: flex;
    margin-right: 43px;
}

.picker {
    display: flex;
    align-items: center;
    gap: 14px;
    height: 54px;
    padding: 0 14px;
    border-radius: 4px;
    background-color: #fff;
    color: #27629d;
}

.picker select {
    appearance: none;
    border: none;
    padding: 0;
    background: none;
    font: inherit;
    font-size: 28px;
    color: #274b7a;
}

.picker-snapshot {
    margin-left: 28px;
    padding-left: 20px;
}

.picker .star {
    margin-right: 7px;
}

.topbar-actions {
    display: flex;
    align-items: center;
    gap: 42px;
    margin-left: auto;
}

.topbar-actions button {
    color: #fff;
}

.topbar-actions .dimmed {
    opacity: 0.4;
}

.topbar-actions .help {
    margin-left: 14px;
}

.user {
    font-size: 28px;
}

/* Side navigation */
.layout {
    display: flex;
    flex: 1;
    min-height: 0;
}

.sidebar {
    width: 319px;
    flex: none;
    overflow: hidden;
    position: relative;
    background-color: #f9f9f9;
    box-shadow: 1px 0 4px rgba(0, 0, 0, 0.25);
}

.sidebar-collapse {
    display: flex;
    justify-content: flex-end;
    height: 42px;
    padding: 12px 16px 0 0;
}

.sidebar h2 {
    height: 56px;
    padding-left: 25px;
    line-height: 56px;
}

.sidebar section + section {
    padding-top: 8px;
    margin-top: 14px;
    position: relative;
}

.sidebar section + section::before {
    content: "";
    position: absolute;
    top: 0;
    left: 25px;
    right: 28px;
    border-top: 1px solid #d6d6d6;
}

.sidebar section + .untitled {
    padding-top: 22px;
}

.nav-item {
    display: flex;
    align-items: center;
    height: 70px;
    padding-left: 25px;
}

.nav-item.child {
    padding-left: 81px;
}

.nav-item.parent {
    color: #000;
}

.chevron {
    display: flex;
    width: 28px;
}

.nav-icon {
    display: flex;
    align-items: center;
    justify-content: center;
    width: 56px;
    height: 56px;
    margin-right: 14px;
    border-radius: 50%;
}

.active {
    color: #274b7a;
}

.active .nav-icon {
    background-color: #274b7a;
    color: #fff;
}

/* Main area */
.content {
    display: flex;
    flex-direction: column;
    gap: 28px;
    flex: 1;
    min-width: 0;
    padding: 28px;
    position: relative;
}

.content::after {
    content: "";
    position: absolute;
    bottom: 0;
    left: 32%;
    width: 26%;
    box-shadow: 0 0 20px 8px rgba(0, 0, 0, 0.2);
}

.search-bar {
    display: flex;
    height: 84px;
    flex: none;
    border: 1px solid #9a9a9a;
    border-radius: 5px;
    overflow: hidden;
}

.search-bar button {
    gap: 14px;
    width: 88px;
    padding-left: 3px;
    background-color: #f1f1f1;
    color: #9a9a9a;
}

.search-bar .caret {
    border-top-color: #c4c4c4;
}

.search-bar input {
    flex: 1;
    border: none;
    outline: none;
    padding: 0 14px;
    font: inherit;
    font-size: 29px;
}

.search-bar input::placeholder {
    color: #9e9e9e;
    font-style: italic;
}

.workspace {
    display: flex;
    gap: 28px;
    flex: 1;
    min-height: 0;
}

.card {
    border-radius: 6px;
    background-color: #fff;
    box-shadow: 0 2px 8px rgba(0, 0, 0, 0.25);
}

.search-drawer {
    display: flex;
    flex-direction: column;
    align-items: center;
    gap: 27px;
    width: 56px;
    flex: none;
}

.search-drawer button {
    width: 56px;
    height: 56px;
    border-bottom: 1px solid #d6d6d6;
    border-radius: 6px 6px 0 0;
    background-color: #f9f9f9;
}

.search-drawer h3 {
    writing-mode: vertical-rl;
    transform: rotate(180deg);
    font-size: 32px;
    font-weight: 400;
    line-height: 40px;
    color: #274b7a;
}

.map-card {
    display: flex;
    flex: 1;
    min-width: 0;
}

.map {
    flex: 1;
    min-width: 0;
    position: relative;
}

.world {
    display: block;
    width: 100%;
    height: 100%;
}

.land {
    fill: #e5e5e5;
    stroke: #e5e5e5;
    stroke-width: 1;
    stroke-linejoin: round;
}

.water {
    fill: #fff;
}

.border {
    fill: none;
    stroke: #f8f8f8;
    stroke-width: 3px;
    stroke-linejoin: round;
    vector-effect: non-scaling-stroke;
}

.links {
    fill: none;
    stroke: #383838;
    stroke-width: 1.5;
}

.cluster {
    font-size: 28px;
    font-weight: 500;
    text-anchor: middle;
}

.cluster rect {
    fill: #fff;
    stroke: #383838;
    stroke-width: 5;
}

.cluster text {
    fill: #383838;
}

.site text {
    fill: #383838;
    stroke: #fff;
    stroke-width: 3px;
    paint-order: stroke;
    text-anchor: middle;
}

.site-disc {
    fill: #fff;
    stroke: #383838;
    stroke-width: 1;
}

.zoom {
    position: absolute;
    right: 28px;
    bottom: 28px;
    border-radius: 5px;
    background-color: #fff;
    box-shadow: 0 1px 4px rgba(0, 0, 0, 0.3);
}

.zoom button {
    width: 56px;
    height: 56px;
}

.zoom button + button {
    border-top: 1px solid #d6d6d6;
}

.zoom button:disabled {
    color: #c8c8c8;
}

.zoom .icon {
    stroke-width: 3;
}

/* Link options */
.options {
    position: relative;
    width: 392px;
    flex: none;
    border-radius: 6px;
    box-shadow: 0 1px 5px rgba(0, 0, 0, 0.3);
}

.options section {
    padding: 21px 28px 14px;
    border-bottom: 1px solid #d6d6d6;
}

.options section + section {
    padding-bottom: 21px;
}

.options h3 {
    line-height: 28px;
}

.options label {
    display: flex;
    align-items: center;
    line-height: 28px;
}

.options input {
    appearance: none;
    position: relative;
    height: 28px;
    margin: 0;
    background-color: #27629d;
}

.toggle {
    gap: 18px;
    margin-top: 28px;
}

.toggle input {
    width: 56px;
    border-radius: 14px;
}

.toggle input::after {
    content: "";
    position: absolute;
    top: 5px;
    right: 5px;
    width: 18px;
    height: 18px;
    border-radius: 50%;
    background-color: #fff;
    box-shadow: 0 1px 3px rgba(0, 0, 0, 0.5);
}

.checks {
    display: flex;
    flex-direction: column;
    gap: 14px;
    margin-top: 21px;
}

.check {
    gap: 21px;
}

.check input {
    width: 28px;
    border-radius: 3px;
}

.check input::after {
    content: "";
    position: absolute;
    top: 3px;
    left: 10px;
    width: 10px;
    height: 18px;
    border: solid #fff;
    border-width: 0 4px 4px 0;
    transform: rotate(45deg);
}

.collapse {
    position: absolute;
    top: 0;
    right: 0;
    width: 28px;
    height: 28px;
    border-radius: 5px;
    background-color: #fff;
    box-shadow: 0 2px 6px rgba(0, 0, 0, 0.3);
}

.collapse .icon {
    stroke-width: 2;
}
```
